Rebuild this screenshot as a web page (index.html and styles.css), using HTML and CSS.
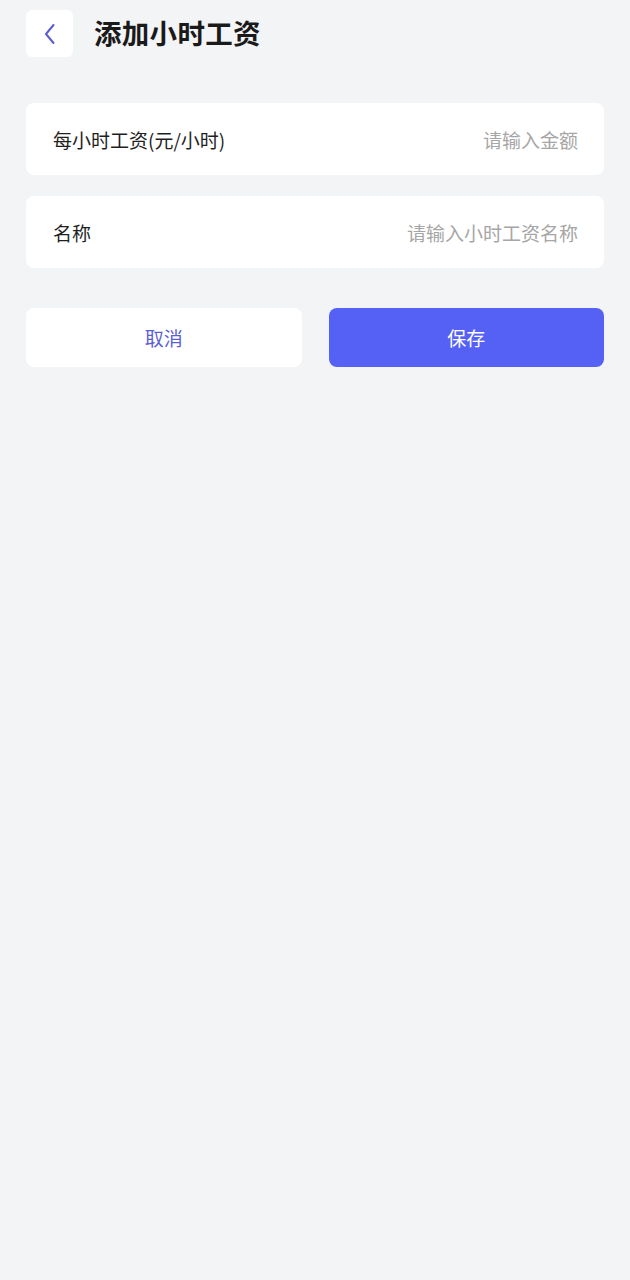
FILE: index.html
```html
<!DOCTYPE html>
<html lang="zh-CN">
<head>
    <meta charset="UTF-8">
    <meta name="viewport" content="width=device-width, initial-scale=1.0">
    <title>添加小时工资</title>
    <link rel="stylesheet" href="styles.css">
</head>
<body>
    <div class="header">
        <button class="back-btn" aria-label="返回">
            <svg width="14" height="22" viewBox="0 0 14 22">
                <path d="M10.5 2 L3 11 L10.5 20" fill="none" stroke="#5b5bd6" stroke-width="2" stroke-linecap="round" stroke-linejoin="round"/>
            </svg>
        </button>
        <h1>添加小时工资</h1>
    </div>

    <div class="form">
        <div class="field">
            <label for="rate">每小时工资(元/小时)</label>
            <input type="text" id="rate" placeholder="请输入金额">
        </div>
        <div class="field">
            <label for="name">名称</label>
            <input type="text" id="name" placeholder="请输入小时工资名称">
        </div>
    </div>

    <div class="actions">
        <button class="btn cancel">取消</button>
        <button class="btn save">保存</button>
    </div>
</body>
</html>
```

FILE: styles.css
```css
body {
    margin: 0;
    padding: 10px 26px;
    background: #f3f4f6;
    font-family: "Noto Sans CJK SC", "Noto Sans", sans-serif;
    color: #1a1a1a;
}

.header {
    display: flex;
    align-items: center;
    height: 47px;
}

.back-btn {
    width: 47px;
    height: 47px;
    border: none;
    border-radius: 6px;
    background: white;
    display: flex;
    align-items: center;
    justify-content: center;
    padding: 0;
    margin-right: 21px;
}

h1 {
    margin: 0 0 3px;
    font-size: 27.5px;
    font-weight: 700;
    color: #1a1a1a;
    letter-spacing: 0.3px;
}

.form {
    margin-top: 46px;
    display: flex;
    flex-direction: column;
    gap: 21px;
}

.field {
    background: white;
    border-radius: 8px;
    height: 72px;
    padding: 0 26px 0 27px;
    display: flex;
    align-items: center;
    justify-content: space-between;
}

.field label {
    font-size: 19px;
    color: #1f1f1f;
    white-space: nowrap;
}

.field input {
    border: none;
    outline: none;
    background: transparent;
    text-align: right;
    font-family: inherit;
    font-size: 19px;
    flex: 1;
    min-width: 0;
    padding: 0;
}

.field input::placeholder {
    color: #a6a6a6;
}

.actions {
    margin-top: 40px;
    display: flex;
    gap: 27px;
}

.btn {
    flex: 1;
    height: 59px;
    border: none;
    border-radius: 8px;
    font-family: inherit;
    font-size: 19px;
}

.cancel {
    background: white;
    color: #5b5fd4;
}

.save {
    background: #5561f5;
    color: white;
}
```
